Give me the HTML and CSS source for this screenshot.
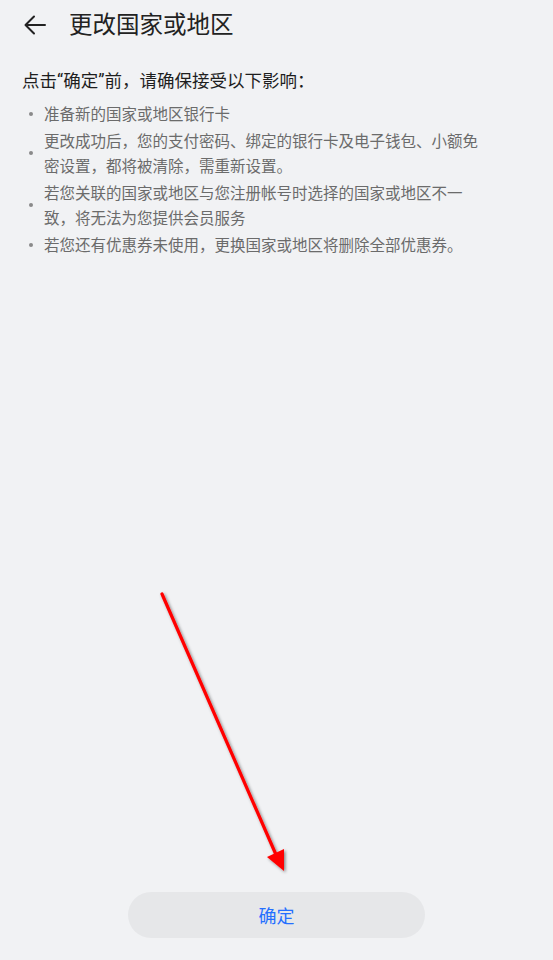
FILE: index.html
```html
<!DOCTYPE html>
<html lang="zh-CN">
<head>
  <meta charset="UTF-8">
  <title>更改国家或地区</title>
  <link rel="stylesheet" href="styles.css">
</head>
<body>
  <div class="page">
    <div class="top-bar">
      <svg class="back-icon" width="24" height="24" viewBox="0 0 24 24">
        <path d="M22 12H3M11 3.5L2.5 12L11 20.5" fill="none" stroke="#222" stroke-width="2" stroke-linecap="round" stroke-linejoin="round"/>
      </svg>
      <div class="top-title">更改国家或地区</div>
    </div>
    <div class="content">
      <div class="notice-title">点击<span class="q">“</span>确定<span class="q">”</span>前，请确保接受以下影响：</div>
      <ul class="notice-list">
        <li><span class="dot"></span><span class="txt">准备新的国家或地区银行卡</span></li>
        <li><span class="dot"></span><span class="txt">更改成功后，您的支付密码、绑定的银行卡及电子钱包、小额免密设置，都将被清除，需重新设置。</span></li>
        <li><span class="dot"></span><span class="txt">若您关联的国家或地区与您注册帐号时选择的国家或地区不一致，将无法为您提供会员服务</span></li>
        <li><span class="dot"></span><span class="txt">若您还有优惠券未使用，更换国家或地区将删除全部优惠券。</span></li>
      </ul>
    </div>
    <div class="bottom">
      <button class="confirm-btn">确定</button>
    </div>
    <!-- 标注箭头 -->
    <svg class="mark-arrow" width="553" height="960" viewBox="0 0 553 960">
      <defs>
        <filter id="sh" x="-20%" y="-20%" width="140%" height="140%">
          <feDropShadow dx="1.5" dy="1.5" stdDeviation="1.5" flood-color="#000" flood-opacity="0.45"/>
        </filter>
      </defs>
      <g filter="url(#sh)">
        <line x1="162" y1="594" x2="277" y2="857" stroke="#ff0000" stroke-width="3.2" stroke-linecap="round"/>
        <polygon points="284,871 267,857 284,849" fill="#ff0000"/>
      </g>
    </svg>
  </div>
</body>
</html>
```

FILE: styles.css
```css
html, body {
  margin: 0;
  padding: 0;
}
body {
  background: #f1f2f4;
  font-family: "Noto Sans CJK SC", "Noto Sans", sans-serif;
  color: #222;
}
.page {
  position: relative;
  width: 553px;
  height: 960px;
  display: flex;
  flex-direction: column;
}
.top-bar {
  height: 50px;
  display: flex;
  align-items: center;
  padding-left: 23px;
  box-sizing: border-box;
}
.back-icon {
  display: block;
}
.top-title {
  margin-left: 22px;
  font-size: 23.5px;
  color: #222;
  line-height: 1;
  margin-top: -2px;
}
.content {
  flex: 1;
  padding: 17px 22px 0 22px;
}
.notice-title {
  font-size: 17.5px;
  line-height: 26px;
  color: #1e1e1e;
  margin-bottom: 7px;
}
.notice-title .q {
  font-family: Roboto, "Noto Sans", sans-serif;
}
.notice-list {
  list-style: none;
  margin: 0;
  padding: 0;
}
.notice-list li {
  display: flex;
  align-items: center;
  font-size: 15.5px;
  line-height: 25px;
  color: #6b6b6b;
  margin-bottom: 2px;
}
.dot {
  width: 4px;
  height: 4px;
  border-radius: 50%;
  background: #8a8a8a;
  margin: 0 11px 0 7px;
  flex-shrink: 0;
}
.txt {
  width: 442px;
}
.bottom {
  display: flex;
  justify-content: center;
  padding-bottom: 22px;
}
.confirm-btn {
  width: 297px;
  height: 46px;
  border: none;
  border-radius: 23px;
  background: #e6e7e9;
  color: #256fff;
  font-family: "Noto Sans CJK SC", sans-serif;
  font-size: 18px;
  padding: 0;
}
.mark-arrow {
  position: absolute;
  left: 0;
  top: 0;
  pointer-events: none;
}
```
